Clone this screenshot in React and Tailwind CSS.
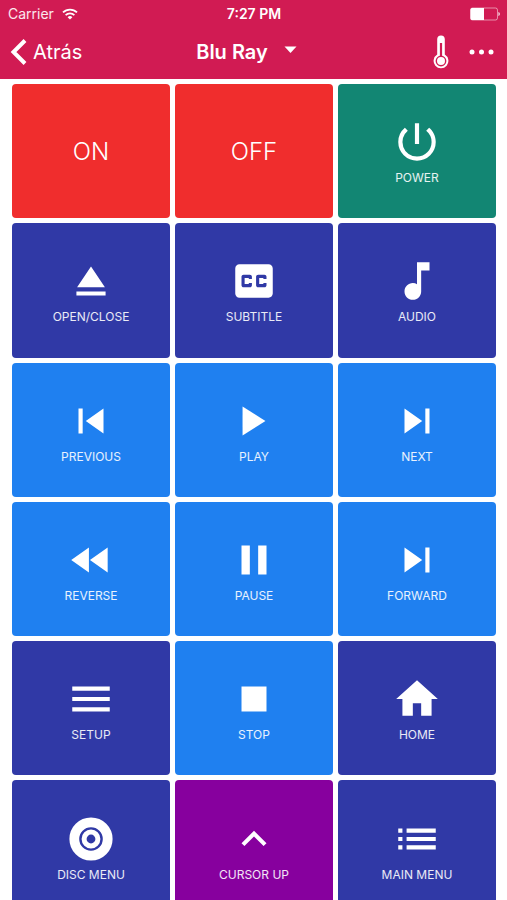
import {
  MdClosedCaption,
  MdEject,
  MdExpandLess,
  MdFastRewind,
  MdHome,
  MdList,
  MdMenu,
  MdMusicNote,
  MdPause,
  MdPowerSettingsNew,
  MdSkipNext,
  MdSkipPrevious,
  MdStop,
} from "react-icons/md";

function PlayIcon({ className }) {
  return (
    <svg viewBox="0 0 24 24" className={className} fill="currentColor" aria-hidden="true">
      <path d="M6.5 5v14l11-7z" />
    </svg>
  );
}

function DiscIcon({ className }) {
  return (
    <svg viewBox="0 0 50 50" className={className} fill="none" aria-hidden="true">
      <circle cx="25" cy="25" r="16.7" stroke="currentColor" strokeWidth="9.8" />
      <circle cx="25" cy="25" r="6.9" stroke="currentColor" strokeWidth="5" />
    </svg>
  );
}

function ThermometerIcon() {
  return (
    <svg viewBox="0 0 16 34" className="h-[34px] w-4" fill="none" aria-hidden="true">
      <path d="M4.2 19.6V4.2a3.8 3.8 0 0 1 7.6 0v15.4a7.4 7.4 0 1 1-7.6 0Z" fill="#fff" />
      <path d="M8 8v14" stroke="#d11b53" strokeWidth="2.2" />
      <circle cx="8" cy="26" r="4.7" fill="#fff" stroke="#d11b53" strokeWidth="1.4" />
    </svg>
  );
}

function WifiIcon() {
  return (
    <svg viewBox="0 0 16 12" className="h-3 w-4" fill="none" stroke="#fff" aria-hidden="true">
      <path d="M1 4.4a10 10 0 0 1 14 0" strokeWidth="1.8" />
      <path d="M3.6 7.1a6.3 6.3 0 0 1 8.8 0" strokeWidth="1.7" />
      <path d="M8 11.6 5.6 9.2a3.5 3.5 0 0 1 4.8 0Z" fill="#fff" stroke="none" />
    </svg>
  );
}

function BatteryIcon() {
  return (
    <svg viewBox="0 0 30 14" className="h-[14px] w-[30px]" fill="none" aria-hidden="true">
      <rect x="0.5" y="1" width="27" height="12" rx="2" stroke="#fff" strokeOpacity="0.5" />
      <path d="M2 1h12v12H2a1.5 1.5 0 0 1-1.5-1.5v-9A1.5 1.5 0 0 1 2 1Z" fill="#fff" />
      <path d="M28.5 5v4c1.6-.6 1.6-3.4 0-4Z" fill="#fff" />
    </svg>
  );
}

const RED = "bg-[#f02d2d]";
const GREEN = "bg-[#128673]";
const INDIGO = "bg-[#3039a6]";
const BLUE = "bg-[#1f80f0]";
const PURPLE = "bg-[#87009e]";

const keys = [
  { label: "ON", color: RED },
  { label: "OFF", color: RED },
  { label: "POWER", color: GREEN, icon: MdPowerSettingsNew },
  { label: "OPEN/CLOSE", color: INDIGO, icon: MdEject },
  { label: "SUBTITLE", color: INDIGO, icon: MdClosedCaption },
  { label: "AUDIO", color: INDIGO, icon: MdMusicNote },
  { label: "PREVIOUS", color: BLUE, icon: MdSkipPrevious },
  { label: "PLAY", color: BLUE, icon: PlayIcon },
  { label: "NEXT", color: BLUE, icon: MdSkipNext },
  { label: "REVERSE", color: BLUE, icon: MdFastRewind },
  { label: "PAUSE", color: BLUE, icon: MdPause },
  { label: "FORWARD", color: BLUE, icon: MdSkipNext },
  { label: "SETUP", color: INDIGO, icon: MdMenu },
  { label: "STOP", color: BLUE, icon: MdStop },
  { label: "HOME", color: INDIGO, icon: MdHome },
  { label: "DISC MENU", color: INDIGO, icon: DiscIcon },
  { label: "CURSOR UP", color: PURPLE, icon: MdExpandLess },
  { label: "MAIN MENU", color: INDIGO, icon: MdList },
];

function RemoteKey({ label, color, icon: Icon }) {
  return (
    <button
      type="button"
      className={`flex aspect-[20/17] flex-col items-center justify-center gap-[3px] rounded pt-px text-white ${color}`}
    >
      {Icon ? (
        <>
          <Icon className="size-[50px]" />
          <span className="text-xs leading-4 text-white/90">{label}</span>
        </>
      ) : (
        <span className="text-2xl font-light">{label}</span>
      )}
    </button>
  );
}

export default function App() {
  return (
    <div className="flex h-screen flex-col bg-white font-['Inter',sans-serif]">
      <header className="shrink-0 bg-[#d11b53] pb-[3px] text-white">
        {/* Status bar */}
        <div className="grid h-7 grid-cols-[1fr_auto_1fr] items-center pl-2 pr-[7px] text-sm">
          <div className="flex items-center gap-2">
            <span className="text-white/90">Carrier</span>
            <WifiIcon />
          </div>
          <span className="font-semibold">7:27 PM</span>
          <div className="flex justify-end">
            <BatteryIcon />
          </div>
        </div>

        {/* Navigation */}
        <nav className="grid h-12 grid-cols-[1fr_auto_1fr] items-center pl-[10px] pr-3">
          <button type="button" className="flex items-center gap-1.5 text-xl">
            <svg viewBox="0 0 17 26" className="h-[26px] w-[17px]" fill="none" aria-hidden="true">
              <path d="M15 1.5 3.5 13 15 24.5" stroke="#fff" strokeWidth="4" />
            </svg>
            Atrás
          </button>
          <button type="button" className="flex items-center gap-4 pr-3 text-xl font-semibold">
            Blu Ray
            <svg viewBox="0 0 13 12" className="h-3 w-[13px]" fill="currentColor" aria-hidden="true">
              <path d="M0.5 0.5h12L6.5 7Z" />
            </svg>
          </button>
          <div className="flex items-center justify-end gap-5">
            <button type="button" aria-label="Temperature">
              <ThermometerIcon />
            </button>
            <button type="button" aria-label="More options">
              <svg viewBox="0 0 26 6" className="h-[6px] w-[26px]" fill="currentColor" aria-hidden="true">
                <circle cx="3" cy="3" r="2.5" />
                <circle cx="12.5" cy="3" r="2.5" />
                <circle cx="22" cy="3" r="2.5" />
              </svg>
            </button>
          </div>
        </nav>
      </header>

      <main className="min-h-0 flex-1 overflow-y-auto pb-3 pl-3 pr-[11px] pt-[5px] [scrollbar-width:none]">
        <div className="grid grid-cols-3 gap-[5px]">
          {keys.map((key) => (
            <RemoteKey key={key.label} {...key} />
          ))}
        </div>
      </main>
    </div>
  );
}
